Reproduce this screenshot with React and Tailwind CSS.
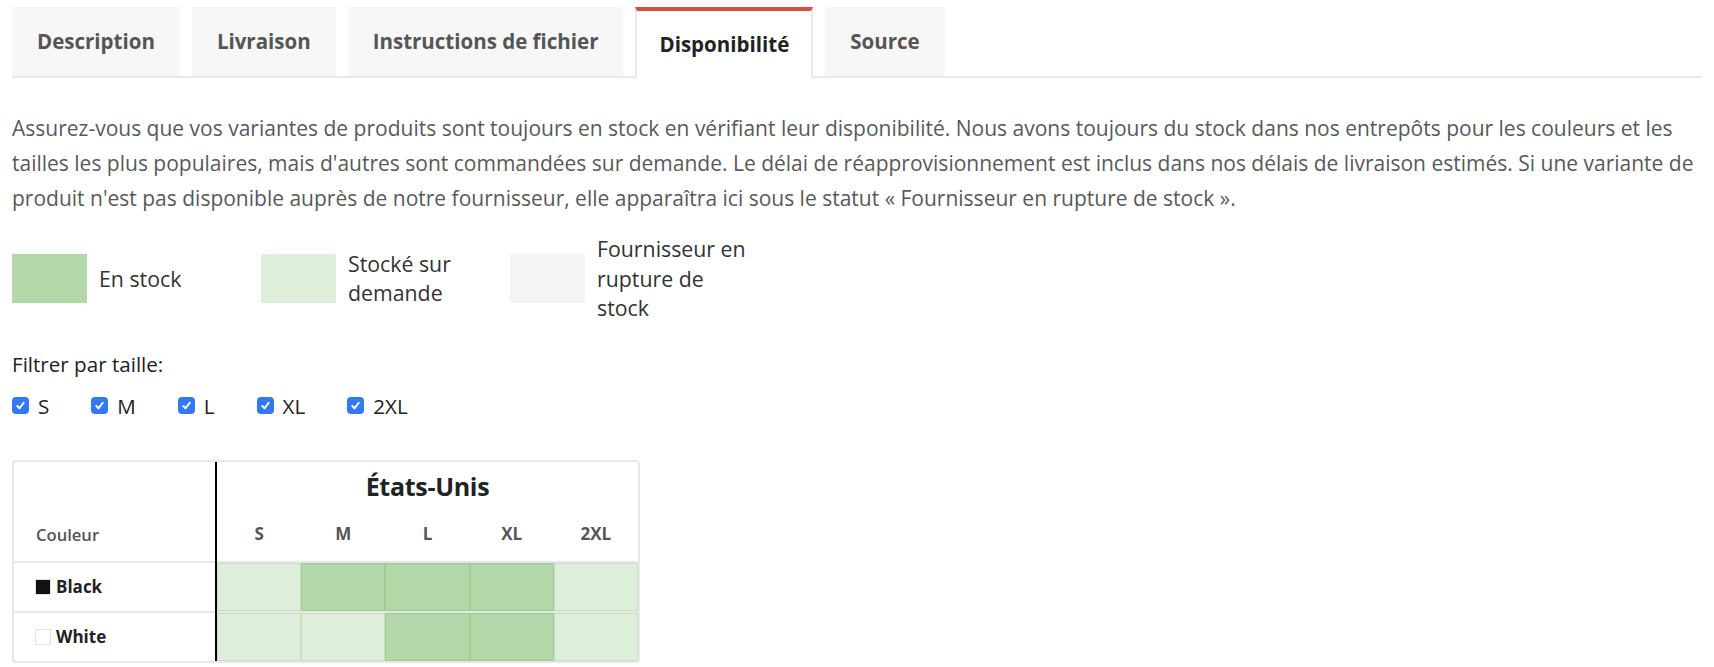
import { useState } from 'react'

// ── Datos ────────────────────────────────────────────────────────────────────

const ONGLETS = ['Description', 'Livraison', 'Instructions de fichier', 'Disponibilité', 'Source']

const LEGENDE = [
  { id: 'stock', texte: 'En stock', clase: 'bg-[#b2d7a8]' },
  { id: 'demande', texte: 'Stocké sur demande', clase: 'bg-[#dfeedb]' },
  { id: 'rupture', texte: 'Fournisseur en rupture de stock', clase: 'bg-[#f4f4f4]' },
]

const TAILLES = ['S', 'M', 'L', 'XL', '2XL']

// 'stock' = vert foncé, 'demande' = vert clair
const COULEURS = [
  { nom: 'Black', pastille: 'bg-[#111111]', dispo: ['demande', 'stock', 'stock', 'stock', 'demande'] },
  { nom: 'White', pastille: 'bg-white', dispo: ['demande', 'demande', 'stock', 'stock', 'demande'] },
]

const CLASES_DISPO = {
  stock: 'bg-[#b2d7a8] border-[#9ecb92]',
  demande: 'bg-[#dfeedb] border-[#c9dfc3]',
}

function CaseCochee({ coche, onClick }) {
  return (
    <span
      onClick={onClick}
      className={`w-[17px] h-[17px] rounded-[4px] flex items-center justify-center shrink-0 ${coche ? 'bg-[#3478f6]' : 'bg-white border border-[#999]'}`}
    >
      {coche && (
        <svg width="11" height="11" viewBox="0 0 12 12" fill="none" stroke="white" strokeWidth="2.2" strokeLinecap="round" strokeLinejoin="round">
          <polyline points="2.5 6.5 5 9 9.5 3" />
        </svg>
      )}
    </span>
  )
}

export default function App() {
  const [filtres, setFiltres] = useState(TAILLES.map(() => true))

  return (
    <div className="bg-white min-h-screen px-3 pt-[7px] font-['Open_Sans','Lato',sans-serif] text-[#333]">

      {/* Onglets */}
      <div className="flex gap-3 border-b-2 border-[#e8e8e8]">
        {ONGLETS.map(o => {
          const actif = o === 'Disponibilité'
          return (
            <div
              key={o}
              className={`h-[71px] -mb-[2px] flex items-center text-[20.5px] font-bold ${actif ? 'px-[22px] bg-white text-[#222] border-t-4 border-t-[#dc4c46] border-x-2 border-x-[#e8e8e8]' : 'px-[25px] bg-[#f7f7f7] text-[#555] border-b-2 border-[#e8e8e8]'}`}
            >
              {o}
            </div>
          )
        })}
      </div>

      {/* Texte */}
      <p className="mt-[33px] text-[21px] leading-[35px] text-[#595959] pr-2">
        Assurez-vous que vos variantes de produits sont toujours en stock en vérifiant leur disponibilité. Nous avons toujours du stock dans nos entrepôts pour les couleurs et les tailles les plus populaires, mais d'autres sont commandées sur demande. Le délai de réapprovisionnement est inclus dans nos délais de livraison estimés. Si une variante de produit n'est pas disponible auprès de notre fournisseur, elle apparaîtra ici sous le statut « Fournisseur en rupture de stock ».
      </p>

      {/* Légende */}
      <div className="flex mt-[18px]">
        {LEGENDE.map(l => (
          <div key={l.id} className="w-[249px] flex items-center gap-3">
            <div className={`w-[75px] h-[49px] shrink-0 ${l.clase}`} />
            <span className="w-[152px] text-[21.3px] leading-[29.5px] text-[#333]">{l.texte}</span>
          </div>
        ))}
      </div>

      {/* Filtre */}
      <p className="mt-[27px] text-[20.6px] leading-[28px] text-[#222]">Filtrer par taille:</p>
      <div className="flex items-center mt-[14px]">
        {TAILLES.map((t, i) => (
          <label key={t} className="flex items-center gap-[9px] mr-[42px] text-[20.6px] leading-[28px] text-[#222]">
            <CaseCochee
              coche={filtres[i]}
              onClick={() => setFiltres(f => f.map((v, j) => (j === i ? !v : v)))}
            />
            {t}
          </label>
        ))}
      </div>

      {/* Tableau */}
      <div className="mt-[40px] w-[628px] border-2 border-[#e8e8e8] rounded-[4px] flex overflow-hidden">
        <div className="w-[203px] shrink-0 border-r-2 border-black">
          <div className="h-[99px] flex items-end pb-[15px] pl-[22px] text-[16.6px] leading-[22px] font-semibold text-[#555]">
            Couleur
          </div>
          {COULEURS.map(c => (
            <div key={c.nom} className="h-[50px] border-t-2 border-[#e8e8e8] flex items-center gap-[5px] pl-[21px] text-[17px] font-bold text-[#222]">
              <span className={`w-[16px] h-[16px] border-[1.5px] border-[#e2e2e2] ${c.pastille}`} />
              {c.nom}
            </div>
          ))}
        </div>

        <div className="flex-1">
          <div className="h-[50px] flex items-center justify-center text-[25px] font-bold text-[#222] tracking-[-0.3px]">
            États-Unis
          </div>
          <div className="h-[49px] pb-[4px] grid grid-cols-5 text-[17px] font-bold text-[#555]">
            {TAILLES.map(t => (
              <div key={t} className="flex items-center justify-center">{t}</div>
            ))}
          </div>
          {COULEURS.map(c => (
            <div key={c.nom} className="grid grid-cols-5 border-t-2 border-[#e8e8e8]">
              {c.dispo.map((d, i) => (
                <div key={i} className={`h-[48px] border ${CLASES_DISPO[d]}`} />
              ))}
            </div>
          ))}
        </div>
      </div>
    </div>
  )
}
